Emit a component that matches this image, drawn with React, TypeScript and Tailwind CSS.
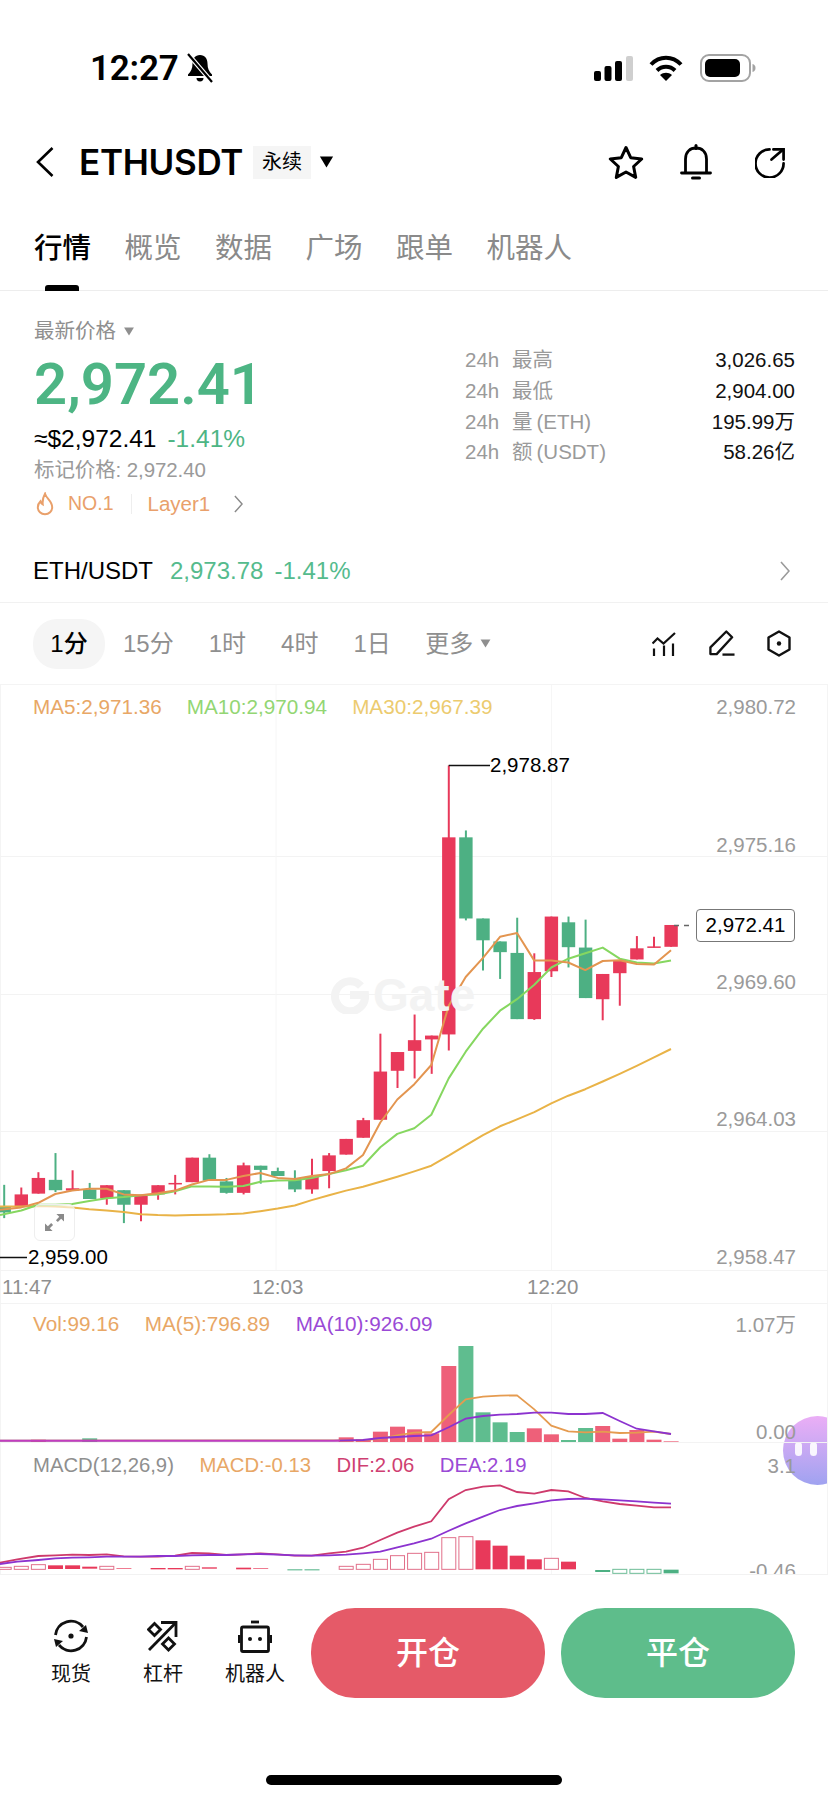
import { ReactNode } from 'react';

type Pt = [number, number];

// sampled chart data: x is on a 3x grid, y is scaled per panel
const slotX = (i: number) => 21.3 + 17.1 * i;
const mainY = (v: number) => v / 2.613 + 5;
const volY = (v: number) => v / 3 - 13;
const macdY = (v: number) => v / 3 - 153;

const toLine = (pts: Pt[], fy: (v: number) => number) =>
  pts.map(([x, y]) => `${(x / 3).toFixed(1)},${fy(y).toFixed(1)}`).join(' ');

const RIGHT = 1242;
const shift = (pts: Pt[]): Pt[] => pts.map(([x, y]) => [x + RIGHT, y]);

const ma5: Pt[] = [
  [0, 1358], [64, 1352], [115, 1340], [166, 1317], [217, 1308], [268, 1303], [320, 1303], [371, 1318], [422, 1320],
  [473, 1315], [525, 1308], [576, 1292], [627, 1280], [679, 1280], [730, 1270], [781, 1262], [833, 1275], [884, 1278],
  [935, 1270], [987, 1265], [1038, 1250], [1089, 1215], [1141, 1130], [1192, 1070], [1243, 1030],
  ...shift([
    [52, 980], [104, 825], [155, 750], [207, 700], [258, 645], [309, 635], [361, 707], [412, 707], [463, 712],
    [514, 732], [566, 708], [617, 706], [668, 716], [720, 717], [771, 680],
  ]),
];
const ma10: Pt[] = [
  [0, 1372], [64, 1360], [115, 1345], [166, 1345], [217, 1343], [268, 1335], [320, 1328], [371, 1325], [422, 1320],
  [473, 1318], [525, 1310], [576, 1297], [627, 1297], [679, 1298], [730, 1296], [781, 1285], [833, 1282], [884, 1281],
  [935, 1275], [987, 1265], [1038, 1255], [1089, 1243], [1141, 1195], [1192, 1160], [1243, 1145],
  ...shift([
    [52, 1110], [104, 1015], [155, 945], [207, 885], [258, 838], [309, 808], [361, 770], [412, 725], [463, 702],
    [514, 688], [566, 673], [617, 702], [668, 712], [720, 715], [771, 707],
  ]),
];
const ma30: Pt[] = [
  [0, 1350], [64, 1350], [115, 1348], [166, 1350], [217, 1352], [268, 1357], [320, 1360], [371, 1364], [422, 1370],
  [473, 1372], [525, 1373], [576, 1372], [627, 1371], [679, 1370], [730, 1368], [781, 1362], [833, 1355], [884, 1347],
  [935, 1333], [987, 1320], [1038, 1308], [1089, 1298], [1141, 1285], [1192, 1272], [1243, 1258],
  ...shift([
    [52, 1243], [104, 1217], [155, 1190], [207, 1163], [258, 1140], [309, 1122], [361, 1103], [412, 1080], [463, 1060],
    [514, 1043], [566, 1023], [617, 1003], [668, 982], [720, 960], [771, 938],
  ]),
];

// slot, up?, bodyTop, bodyBottom, wickTop, wickBottom
const candles: [number, boolean, number, number, number, number][] = [
  [-1, false, 1350, 1365, 1293, 1380],
  [0, true, 1318, 1350, 1300, 1350],
  [1, true, 1275, 1316, 1260, 1316],
  [2, false, 1280, 1307, 1210, 1312],
  [3, true, 1302, 1308, 1255, 1308],
  [4, false, 1305, 1330, 1288, 1330],
  [5, true, 1294, 1328, 1294, 1345],
  [6, false, 1307, 1345, 1307, 1393],
  [7, true, 1322, 1345, 1322, 1388],
  [8, true, 1294, 1318, 1294, 1332],
  [9, true, 1288, 1292, 1267, 1318],
  [10, true, 1222, 1286, 1222, 1286],
  [11, false, 1222, 1282, 1213, 1282],
  [12, false, 1284, 1314, 1275, 1316],
  [13, true, 1242, 1314, 1235, 1318],
  [14, false, 1243, 1254, 1243, 1290],
  [15, false, 1257, 1270, 1248, 1270],
  [16, false, 1280, 1305, 1255, 1312],
  [17, true, 1272, 1305, 1225, 1316],
  [18, true, 1216, 1257, 1210, 1302],
  [19, true, 1173, 1214, 1173, 1214],
  [20, true, 1124, 1170, 1118, 1170],
  [21, true, 997, 1123, 898, 1123],
  [22, true, 946, 995, 946, 1040],
  [23, true, 915, 943, 848, 1015],
  [24, true, 903, 913, 903, 1003],
  [25, true, 385, 900, 197, 942],
  [26, false, 385, 597, 367, 602],
  [27, false, 597, 654, 597, 733],
  [28, false, 657, 685, 657, 755],
  [29, false, 687, 860, 595, 860],
  [30, true, 737, 860, 688, 862],
  [31, true, 592, 735, 592, 750],
  [32, false, 607, 672, 592, 725],
  [33, false, 673, 805, 600, 805],
  [34, true, 742, 808, 742, 863],
  [35, true, 707, 740, 707, 825],
  [36, true, 675, 704, 643, 704],
  [37, true, 670, 673, 645, 673],
  [38, true, 614, 671, 614, 671],
];

const volBars: [number, boolean, number][] = [
  [1, true, 449], [4, false, 445], [19, true, 442], [20, true, 448], [21, true, 425], [22, true, 410], [23, true, 418],
  [24, true, 430], [25, true, 228], [26, false, 168], [27, false, 367], [28, false, 397], [29, false, 426],
  [30, true, 415], [31, true, 433], [32, false, 450], [33, false, 414], [34, true, 408], [35, true, 446],
  [36, true, 420], [37, true, 449], [38, true, 454],
];

const volMa5: Pt[] = [
  [0, 452], [1089, 451], [1141, 446], [1192, 436], [1242, 428],
  ...shift([
    [52, 426], [104, 375], [155, 328], [207, 320], [258, 317], [309, 316], [361, 358], [412, 407], [463, 424],
    [514, 427], [566, 425], [617, 429], [668, 428], [720, 425], [771, 432],
  ]),
];
const volMa10: Pt[] = [
  [0, 452], [1000, 452], [1089, 450], [1141, 444], [1192, 441], [1242, 438],
  ...shift([
    [52, 436], [104, 412], [155, 386], [207, 378], [258, 374], [309, 372], [361, 368], [412, 368], [463, 372],
    [514, 372], [566, 369], [617, 393], [668, 416], [720, 424], [771, 432],
  ]),
];

// slot, kind (f filled, h hollow), colour group, top, bottom
const macdBars: [number, 'f' | 'h', 'r' | 'g', number, number][] = [
  [-1, 'h', 'r', 832, 838], [0, 'h', 'r', 829, 838], [1, 'h', 'r', 824, 838], [2, 'f', 'r', 826, 837], [3, 'f', 'r', 826, 837],
  [4, 'f', 'r', 830, 836], [5, 'h', 'r', 829, 838], [6, 'f', 'r', 835, 837], [8, 'f', 'r', 834, 838], [9, 'f', 'r', 834, 838],
  [10, 'h', 'r', 829, 838], [11, 'f', 'r', 832, 836], [13, 'f', 'r', 833, 838], [14, 'f', 'r', 835, 837],
  [16, 'f', 'g', 838, 841], [17, 'f', 'g', 838, 841], [19, 'h', 'r', 829, 838], [20, 'h', 'r', 823, 838],
  [21, 'h', 'r', 808, 838], [22, 'h', 'r', 797, 838], [23, 'h', 'r', 790, 838], [24, 'h', 'r', 787, 838],
  [25, 'h', 'r', 743, 838], [26, 'h', 'r', 740, 838], [27, 'f', 'r', 751, 838], [28, 'f', 'r', 767, 838],
  [29, 'f', 'r', 797, 838], [30, 'f', 'r', 808, 838], [31, 'h', 'r', 805, 838], [32, 'f', 'r', 815, 838],
  [34, 'f', 'g', 840, 846], [35, 'h', 'g', 838, 850], [36, 'h', 'g', 838, 850], [37, 'h', 'g', 838, 850], [38, 'f', 'g', 839, 850],
];

const dif: Pt[] = [
  [0, 818], [52, 808], [115, 798], [166, 796], [217, 794], [268, 795], [320, 793], [371, 799], [422, 800], [473, 800],
  [525, 797], [576, 789], [627, 790], [679, 795], [730, 793], [781, 790], [833, 793], [884, 797], [935, 797], [987, 790],
  [1038, 785], [1089, 773], [1141, 750], [1192, 728], [1242, 710],
  ...shift([
    [52, 694], [104, 628], [155, 600], [207, 590], [258, 586], [309, 606], [361, 611], [412, 600], [463, 604],
    [514, 624], [566, 634], [617, 642], [668, 647], [720, 652], [771, 652],
  ]),
];
const dea: Pt[] = [
  [0, 822], [52, 815], [115, 810], [166, 805], [217, 803], [268, 802], [320, 800], [371, 800], [422, 800], [473, 798],
  [525, 798], [576, 796], [627, 795], [679, 795], [730, 793], [781, 792], [833, 794], [884, 796], [935, 797], [987, 796],
  [1038, 794], [1089, 790], [1141, 785], [1192, 772], [1242, 760],
  ...shift([
    [52, 746], [104, 722], [155, 700], [207, 680], [258, 660], [309, 648], [361, 640], [412, 631], [463, 627],
    [514, 626], [566, 628], [617, 631], [668, 634], [720, 638], [771, 641],
  ]),
];

const RED = '#E8395A';
const GREEN = '#4DB083';

function Caret({ className }: { className: string }) {
  return (
    <svg viewBox="0 0 12 10" className={className} fill="currentColor">
      <path d="M0.5 0.5h11L6 9.5z" />
    </svg>
  );
}

function Chevron({ className }: { className: string }) {
  return (
    <svg viewBox="0 0 10 20" className={className} fill="none" stroke="currentColor" strokeWidth="1.6">
      <path d="M1 1l8 9-8 9" />
    </svg>
  );
}

function StatusBar() {
  return (
    <div className="flex h-[136px] items-center justify-between pl-[90px] pr-[72px]">
      <div className="flex items-center gap-[7px]">
        <span className="font-[Roboto,sans-serif] text-[35px] leading-none font-semibold tracking-[-0.2px]">12:27</span>
        <svg viewBox="0 0 28 30" className="h-[30px] w-[28px]">
          <path d="M14 2c-5 0-7.5 4-7.5 8.5 0 5-1.5 8-4.5 11V23h24v-1.5c-3-3-4.5-6-4.5-11C21.5 6 19 2 14 2z" fill="#000" />
          <path d="M10.5 25h7a3.5 3.5 0 0 1-7 0z" fill="#000" />
          <path d="M2 1l24 28" stroke="#fff" strokeWidth="4.5" />
          <path d="M2 1l24 28" stroke="#000" strokeWidth="2.2" />
        </svg>
      </div>
      <div className="flex items-center">
        <svg viewBox="0 0 39 25" className="h-[25px] w-[39px]">
          <rect x="0" y="15" width="7" height="10" rx="2" fill="#000" />
          <rect x="10.5" y="10" width="7" height="15" rx="2" fill="#000" />
          <rect x="21" y="5" width="7" height="20" rx="2" fill="#000" />
          <rect x="32" y="0" width="7" height="25" rx="2" fill="#cfcfcf" />
        </svg>
        <svg viewBox="0 0 34 26" className="ml-[16px] h-[26px] w-[34px]" fill="none" stroke="#000" strokeWidth="4">
          <path d="M2 9.5C10.5 .5 23.5 .5 32 9.5" />
          <path d="M8 15.5c5-5 13-5 18 0" />
          <path d="M17 26l-6-6c3.5-3 8.5-3 12 0z" fill="#000" stroke="none" />
        </svg>
        <svg viewBox="0 0 56 28" className="ml-[17px] h-[28px] w-[56px]">
          <rect x="1" y="1" width="49" height="26" rx="8" fill="none" stroke="#a3a3a3" strokeWidth="2" />
          <rect x="5" y="5" width="35" height="18" rx="5" fill="#000" />
          <path d="M52.5 10c2 .5 3 2 3 4s-1 3.5-3 4z" fill="#a3a3a3" />
        </svg>
      </div>
    </div>
  );
}

function Header() {
  return (
    <div className="flex h-[52px] items-center pl-[36px] pr-[42px]">
      <svg viewBox="0 0 18 30" className="h-[30px] w-[18px]" fill="none" stroke="#000" strokeWidth="2.6">
        <path d="M16.5 1L2 15l14.5 14" />
      </svg>
      <span className="ml-[25px] font-[Inter,sans-serif] text-[35px] leading-none font-semibold tracking-[-0.3px]">ETHUSDT</span>
      <span className="ml-[10px] flex h-[33px] w-[58px] items-center justify-center bg-[#f5f5f5] text-[20px] leading-none">永续</span>
      <Caret className="ml-[8px] h-[12px] w-[15px] text-black" />
      <div className="ml-auto flex items-center">
        <svg viewBox="0 0 36 34" className="h-[34px] w-[36px]" fill="none" stroke="#000" strokeWidth="3" strokeLinejoin="round">
          <path d="M18 2.5l4.7 10.2 11 1.3-8.1 7.5 2.1 10.9L18 27l-9.7 5.4 2.1-10.9L2.3 14l11-1.3z" />
        </svg>
        <svg viewBox="0 0 32 36" className="ml-[36px] h-[36px] w-[32px]" fill="none" stroke="#000" strokeWidth="2.8">
          <path d="M5.5 29V15C5.5 8 10 4 16 4s10.5 4 10.5 11v14" />
          <path d="M1.5 29h29" strokeLinecap="round" />
          <path d="M16 1.5v3" strokeLinecap="round" strokeWidth="3" />
          <path d="M12.5 34h7" strokeWidth="3" strokeLinecap="round" />
        </svg>
        <svg viewBox="0 0 32 32" className="ml-[43px] h-[31px] w-[31px]" fill="none" stroke="#000" strokeWidth="2.8" strokeLinecap="round">
          <path d="M15 2.5A14.5 14.5 0 1 0 29.5 17" />
          <path d="M17 13L29 2.5" />
          <path d="M19 2.5h10.5V13" />
        </svg>
      </div>
    </div>
  );
}

function Tabs() {
  const items = ['行情', '概览', '数据', '广场', '跟单', '机器人'];
  return (
    <div className="h-[103px] border-b border-[#ededed] pt-[43px]">
      <div className="flex gap-[33.5px] pl-[34px] text-[28.5px] leading-[34px] text-[#8a8a8a]">
        {items.map((t, i) => (
          <span key={t} className={i === 0 ? 'font-medium text-black' : ''}>{t}</span>
        ))}
      </div>
      <div className="mt-[20px] ml-[45px] h-[6px] w-[34px] rounded-t-[3px] bg-black" />
    </div>
  );
}

function Stat({ label, unit, value }: { label: string; unit?: string; value: string }) {
  return (
    <div className="flex h-[30.7px] items-center justify-between">
      <span className="flex items-center text-[#9a9a9a]">
        <span className="w-[47px]">24h</span>
        {label}
        {unit && <span className="ml-[4px]">{unit}</span>}
      </span>
      <span className="text-[#111]">{value}</span>
    </div>
  );
}

function Overview() {
  return (
    <div className="border-b border-[#f1f1f1]">
      <div className="flex pl-[34px] pr-[33px]">
        <div className="w-[431px]">
          <div className="mt-[26px] flex items-center gap-[7px] text-[20.5px] leading-[28px] text-[#8f8f8f]">
            最新价格
            <Caret className="h-[9px] w-[12px] text-[#8f8f8f]" />
          </div>
          <div className="mt-[5px] font-[Roboto,sans-serif] text-[58px] leading-[68px] font-semibold text-[#4DB584]">2,972.41</div>
          <div className="mt-[6px] flex gap-[11px] text-[24.5px] leading-[30px]">
            <span>≈$2,972.41</span>
            <span className="text-[#4DB584]">-1.41%</span>
          </div>
          <div className="mt-[2px] text-[20.5px] leading-[28px] tracking-[-0.1px] text-[#9a9a9a]">标记价格: 2,972.40</div>
          <div className="mt-[5px] flex h-[30px] items-center text-[#E9A06B]">
            <svg viewBox="0 0 20 26" className="ml-[2px] h-[24px] w-[18px]" fill="none" stroke="currentColor" strokeWidth="2.2">
              <path d="M10 1.5c1 5 8 8 8 15a8 8 0 0 1-16 0c0-3 1.5-5 3-6.5.5 2 1.5 3 2.5 3.5C7 9 8 5 10 1.5z" />
            </svg>
            <span className="ml-[14px] text-[19.5px]">NO.1</span>
            <span className="ml-[17px] h-[20px] w-px bg-[#eeeeee]" />
            <span className="ml-[16px] text-[20.5px]">Layer1</span>
            <Chevron className="ml-[24px] h-[18px] w-[9px] text-[#8a8a8a]" />
          </div>
        </div>
        <div className="mt-[54px] flex-1 text-[20.5px] leading-[28px]">
          <Stat label="最高" value="3,026.65" />
          <Stat label="最低" value="2,904.00" />
          <Stat label="量" unit="(ETH)" value="195.99万" />
          <Stat label="额" unit="(USDT)" value="58.26亿" />
        </div>
      </div>
      <div className="mt-[27px] flex h-[50px] items-center pl-[33px] pr-[38px] text-[24px]">
        <span>ETH/USDT</span>
        <span className="ml-[17px] text-[#55BB8D]">2,973.78</span>
        <span className="ml-[11px] text-[#55BB8D]">-1.41%</span>
        <Chevron className="ml-auto h-[20px] w-[10px] text-[#9a9a9a]" />
      </div>
      <div className="h-[6px]" />
    </div>
  );
}

function Intervals() {
  const items = ['15分', '1时', '4时', '1日'];
  return (
    <div className="flex h-[81px] items-center pl-[33px] pr-[37px] text-[24px] text-[#8f8f8f]">
      <span className="flex h-[50px] w-[72px] items-center justify-center rounded-[24px] bg-[#f5f5f5] font-medium text-black">1分</span>
      <div className="ml-[18px] flex gap-[35px]">
        {items.map((t) => (
          <span key={t}>{t}</span>
        ))}
      </div>
      <span className="ml-[34.5px]">更多</span>
      <Caret className="ml-[7px] h-[9px] w-[11px] text-[#8f8f8f]" />
      <div className="ml-auto flex items-center gap-[32px]">
        <svg viewBox="0 0 24 24" className="h-[24px] w-[24px]" fill="none" stroke="#111" strokeWidth="2.2">
          <path d="M.5 11.5l5-5 6 5L23 1" />
          <path d="M2 16.5V24M12 13.5V24M21 11.5V24" />
        </svg>
        <svg viewBox="0 0 28 28" className="h-[27px] w-[27px]" fill="none" stroke="#111" strokeWidth="2.4" strokeLinejoin="round">
          <path d="M19 1.5l6 6L9 25H2.5v-7z" />
          <path d="M15 25.5h12.5" />
        </svg>
        <svg viewBox="0 0 24 27" className="h-[27px] w-[24px]" fill="none" stroke="#111" strokeWidth="2.4" strokeLinejoin="round">
          <path d="M12 1.5l10.5 6v12l-10.5 6-10.5-6v-12z" />
          <circle cx="12" cy="13.5" r="2.2" fill="#111" stroke="none" />
        </svg>
      </div>
    </div>
  );
}

function Panel({ height, children, svg }: { height: number; children: ReactNode; svg: ReactNode }) {
  return (
    <div className="relative border-x border-[#f4f4f4]" style={{ height }}>
      {svg}
      {children}
    </div>
  );
}

function Axis({ top, children }: { top: number; children: ReactNode }) {
  return (
    <span className="absolute right-[31px] -translate-y-1/2 text-[20.5px] leading-none text-[#9a9a9a]" style={{ top }}>
      {children}
    </span>
  );
}

function MainChart() {
  return (
    <Panel
      height={618}
      svg={
        <svg viewBox="0 0 828 618" className="absolute -left-px top-0 h-[618px] w-[828px]" fill="none">
          <path d="M0 171.5H828M0 309.5H828M0 446.5H828M0 585.5H828" stroke="#f3f3f3" />
          <path d="M276 0V585M551.5 0V585" stroke="#f6f6f6" />
          {candles.map(([slot, up, t, b, wt, wb]) => {
            const color = up ? RED : GREEN;
            const x = slotX(slot);
            return (
              <g key={slot}>
                <path d={`M${x} ${mainY(wt)}V${mainY(wb)}`} stroke={color} strokeWidth="2" />
                <rect x={x - 6.7} y={mainY(t)} width="13.4" height={Math.max(mainY(b) - mainY(t), 1.5)} fill={color} />
              </g>
            );
          })}
          <polyline points={toLine(ma30, mainY)} stroke="#E9B347" strokeWidth="2" strokeLinejoin="round" />
          <polyline points={toLine(ma10, mainY)} stroke="#86D760" strokeWidth="2" strokeLinejoin="round" />
          <polyline points={toLine(ma5, mainY)} stroke="#E39550" strokeWidth="2" strokeLinejoin="round" />
          <path d="M448.7 80.5H490M0 572.5H27" stroke="#111" strokeWidth="1.5" />
          <path d="M674 240.5h5M684 240.5h5" stroke="#666" strokeWidth="1.5" />
        </svg>
      }
    >
      <div className="absolute left-[32px] top-[13px] flex gap-[25px] text-[20.7px] leading-[18px]">
        <span className="text-[#E8A766]">MA5:2,971.36</span>
        <span className="text-[#93D673]">MA10:2,970.94</span>
        <span className="text-[#ECCB6F]">MA30:2,967.39</span>
      </div>
      <Axis top={22}>2,980.72</Axis>
      <Axis top={160}>2,975.16</Axis>
      <Axis top={297}>2,969.60</Axis>
      <Axis top={434}>2,964.03</Axis>
      <Axis top={572}>2,958.47</Axis>
      <div className="absolute left-[330px] top-[287px] flex items-center gap-[4px] text-[#f3f3f3]">
        <svg viewBox="0 0 38 38" className="h-[38px] w-[38px]" fill="none" stroke="#f3f3f3" strokeWidth="8">
          <path d="M30 10A15 15 0 1 0 34 19H19" />
        </svg>
        <span className="text-[46px] leading-none font-bold">Gate</span>
      </div>
      <span className="absolute left-[489px] top-[71px] text-[20.5px] leading-[18px] text-black">2,978.87</span>
      <span className="absolute left-[27px] top-[563px] text-[20.5px] leading-[18px] text-black">2,959.00</span>
      <span className="absolute left-[695px] top-[224px] flex h-[33px] w-[99px] items-center justify-center rounded-[4px] border border-[#777] bg-white text-[20.5px] text-black">
        2,972.41
      </span>
      <span className="absolute left-[33px] top-[519px] flex h-[37px] w-[41px] items-center justify-center rounded-[6px] border border-[#eeeeee] bg-white/60">
        <svg viewBox="0 0 22 20" className="h-[19px] w-[21px]" fill="#8a8a8a">
          <path d="M21 1v8l-3-3-3.5 3.5-2-2L16 4l-3-3z" />
          <path d="M1 19v-8l3 3 3.5-3.5 2 2L6 16l3 3z" />
        </svg>
      </span>
      <div className="absolute bottom-[6px] left-0 right-0 text-[20.5px] leading-[20px] text-[#8f8f8f]">
        <span className="absolute left-[1px] bottom-0">11:47</span>
        <span className="absolute left-[251px] bottom-0">12:03</span>
        <span className="absolute left-[526px] bottom-0">12:20</span>
      </div>
    </Panel>
  );
}

function VolumeChart() {
  return (
    <Panel
      height={140}
      svg={
        <svg viewBox="0 0 828 140" className="absolute -left-px top-0 h-[140px] w-[828px]" fill="none">
          <path d="M0 .5H828M0 139.5H828" stroke="#f3f3f3" />
          <path d="M551.5 0V140" stroke="#f6f6f6" />
          {volBars.map(([slot, up, top]) => (
            <rect
              key={slot}
              x={slotX(slot) - 7.5}
              y={volY(top)}
              width="15"
              height={volY(456) - volY(top)}
              fill={up ? '#EE6079' : '#5FBD8F'}
            />
          ))}
          <polyline points={toLine(volMa5, volY)} stroke="#E59B50" strokeWidth="1.8" />
          <polyline points={toLine(volMa10, volY)} stroke="#8C33CF" strokeWidth="1.8" />
          <path d="M0 137.7H340" stroke="#C23CBE" strokeWidth="1.6" />
        </svg>
      }
    >
      <div className="absolute left-[32px] top-[11px] flex gap-[25.5px] text-[20.7px] leading-[20px]">
        <span className="text-[#E8A766]">Vol:99.16</span>
        <span className="text-[#E8A766]">MA(5):796.89</span>
        <span className="text-[#9A4AD6]">MA(10):926.09</span>
      </div>
      <Axis top={22}>1.07万</Axis>
      <Axis top={129}>0.00</Axis>
    </Panel>
  );
}

function MacdChart() {
  return (
    <Panel
      height={131}
      svg={
        <svg viewBox="0 0 828 131" className="absolute -left-px top-0 h-[131px] w-[828px]" fill="none">
          <path d="M551.5 0V131" stroke="#f6f6f6" />
          {macdBars.map(([slot, kind, group, t, b]) => {
            const color = group === 'r' ? RED : GREEN;
            const y = macdY(t);
            const h = macdY(b) - y;
            return kind === 'f' ? (
              <rect key={slot} x={slotX(slot) - 7.5} y={y} width="15" height={h} fill={color} />
            ) : (
              <rect key={slot} x={slotX(slot) - 7} y={y} width="14" height={h} stroke={group === 'r' ? '#E2708A' : '#6DBD97'} strokeWidth="1" fill="#fff" />
            );
          })}
          <polyline points={toLine(dif, macdY)} stroke="#CE3A6C" strokeWidth="1.8" />
          <polyline points={toLine(dea, macdY)} stroke="#8C33CF" strokeWidth="1.8" />
        </svg>
      }
    >
      <div className="absolute left-[32px] top-[12px] flex gap-[25.5px] text-[20.3px] leading-[20px]">
        <span className="text-[#8f8f8f]">MACD(12,26,9)</span>
        <span className="text-[#E8A766]">MACD:-0.13</span>
        <span className="text-[#CF3F72]">DIF:2.06</span>
        <span className="text-[#9A4AD6]">DEA:2.19</span>
      </div>
      <Axis top={23}>3.1</Axis>
      <div className="absolute inset-x-0 bottom-0 h-[11px] overflow-hidden">
        <span className="absolute right-[31px] top-[-2px] text-[20.5px] leading-[20px] text-[#9a9a9a]">-0.46</span>
      </div>
    </Panel>
  );
}

function Shortcut({ label, icon }: { label: string; icon: ReactNode }) {
  return (
    <div className="flex w-[80px] flex-col items-center">
      <div className="flex h-[36px] items-center justify-center">{icon}</div>
      <span className="mt-[6px] text-[20px] leading-[28px] text-[#111]">{label}</span>
    </div>
  );
}

function BottomBar() {
  return (
    <div className="relative">
      <div className="flex pt-[31px] pl-[31px] pr-[33px]">
        <div className="flex w-[264px] gap-[12px] pt-[10px]">
          <Shortcut
            label="现货"
            icon={
              <svg viewBox="0 0 36 36" className="h-[36px] w-[36px]" fill="none" stroke="#111" strokeWidth="2.8">
                <path d="M2.5 17A15.5 15.5 0 0 1 30 9" />
                <path d="M33.5 19A15.5 15.5 0 0 1 6 27" />
                <path d="M35 15l-9-2 7-6zM1 21l9 2-7 6z" fill="#111" stroke="none" />
                <circle cx="18" cy="18" r="2.6" fill="#111" stroke="none" />
              </svg>
            }
          />
          <Shortcut
            label="杠杆"
            icon={
              <svg viewBox="0 0 32 32" className="h-[32px] w-[32px]" fill="none" stroke="#111" strokeWidth="2.8">
                <path d="M2 30L29 2.5" />
                <path d="M14 2.5h15V17" />
                <path d="M7.5 3.5l6 6-6 6-6-6z" />
                <path d="M21.5 18l6 6-6 6-6-6z" />
              </svg>
            }
          />
          <Shortcut
            label="机器人"
            icon={
              <svg viewBox="0 0 34 33" className="h-[33px] w-[34px]" fill="none" stroke="#111" strokeWidth="2.8">
                <path d="M13 2h8" />
                <rect x="3.5" y="7" width="27" height="24.5" rx="1.5" />
                <path d="M1 15v8M33 15v8" />
                <circle cx="12" cy="19" r="2" fill="#111" stroke="none" />
                <circle cx="22" cy="19" r="2" fill="#111" stroke="none" />
              </svg>
            }
          />
        </div>
        <div className="flex flex-1 gap-[16px] pl-[16px]">
          <button className="h-[90px] flex-1 rounded-[44px] bg-[#E55A68] text-[32px] font-medium text-white">开仓</button>
          <button className="h-[90px] flex-1 rounded-[44px] bg-[#5EBD8B] text-[32px] font-medium text-white">平仓</button>
        </div>
      </div>
      <div className="mx-auto mt-[77px] h-[10px] w-[296px] rounded-full bg-black" />
    </div>
  );
}

export default function App() {
  return (
    <div className="relative h-[1801px] w-[828px] overflow-hidden bg-white font-['Liberation_Sans','Noto_Sans_CJK_SC',sans-serif] text-black">
      <StatusBar />
      <Header />
      <Tabs />
      <Overview />
      <Intervals />
      {/* floating assistant bubble, sits behind the axis labels */}
      <div className="absolute left-[783px] top-[1416px] flex h-[69px] w-[69px] gap-[8px] rounded-full bg-gradient-to-b from-[#EBAEF6] to-[#9FA2F0] pl-[12px] pt-[26px]">
        <span className="h-[14px] w-[7px] rounded-full bg-white/90" />
        <span className="h-[14px] w-[7px] rounded-full bg-white/90" />
      </div>
      <div className="relative z-10 border-t border-[#f4f4f4]">
        <MainChart />
        <VolumeChart />
        <MacdChart />
      </div>
      <div className="border-t border-[#f2f2f2] pt-[2px]">
        <BottomBar />
      </div>
    </div>
  );
}
